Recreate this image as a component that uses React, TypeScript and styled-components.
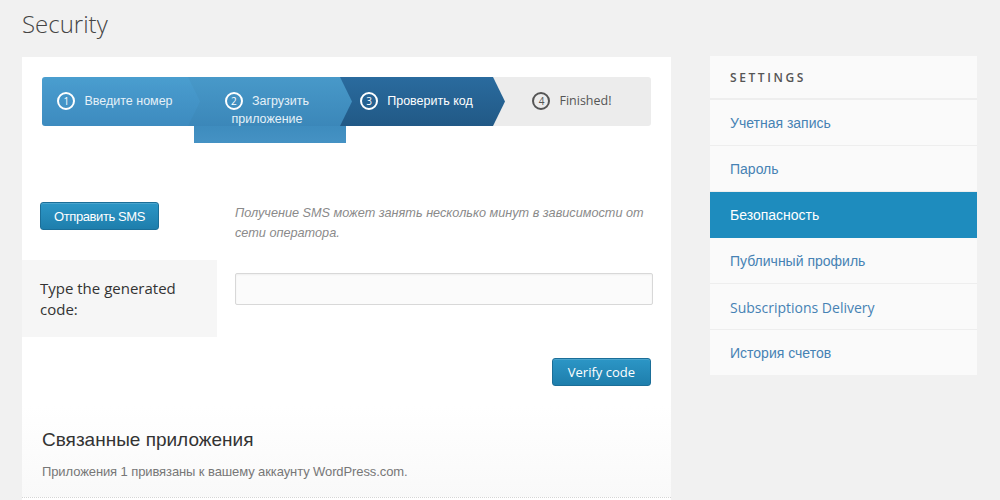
import React from "react";
import styled, { createGlobalStyle } from "styled-components";

const GlobalStyle = createGlobalStyle`
  html, body {
    margin: 0;
    padding: 0;
    background: #f1f1f1;
    font-family: "Open Sans", "Liberation Sans", sans-serif;
  }
`;

const STEPS = [
  { n: 1, label: "Введите номер", w: 146, state: "done" },
  { n: 2, label: "Загрузить приложение", w: 152, state: "done", overhang: true },
  { n: 3, label: "Проверить код", w: 153, state: "active" },
  { n: 4, label: "Finished!", w: 158, state: "todo" },
];

const MENU = [
  { label: "Учетная запись", cyr: true },
  { label: "Пароль", cyr: true },
  { label: "Безопасность", cyr: true, active: true },
  { label: "Публичный профиль", cyr: true },
  { label: "Subscriptions Delivery", cyr: false },
  { label: "История счетов", cyr: true },
];

const TIP = 12;

export default function App() {
  return (
    <>
      <GlobalStyle />
      <Page>
        <Title>Security</Title>
        <Columns>
          <Main>
            <Steps>
              {STEPS.map((s, i) => (
                <Step
                  key={s.n}
                  $w={s.w}
                  $tip={i < STEPS.length - 1}
                  $z={STEPS.length - i}
                >
                  <StepShape
                    $state={s.state}
                    $tip={i < STEPS.length - 1}
                    $first={i === 0}
                    $last={i === STEPS.length - 1}
                  />
                  {s.overhang && <Overhang />}
                  <StepLabel $tip={i < STEPS.length - 1} $state={s.state} $wrap={!!s.overhang}>
                    <StepNum $state={s.state}>{s.n}</StepNum>
                    {s.label}
                  </StepLabel>
                </Step>
              ))}
            </Steps>

            <SmsRow>
              <Cell>
                <BlueButton $cyr>Отправить SMS</BlueButton>
              </Cell>
              <Hint>
                Получение SMS может занять несколько минут в зависимости от
                сети оператора.
              </Hint>
            </SmsRow>

            <CodeRow>
              <CodeLabel>Type the generated code:</CodeLabel>
              <CodeInput type="text" />
            </CodeRow>

            <VerifyRow>
              <BlueButton>Verify code</BlueButton>
            </VerifyRow>

            <Related>
              <RelatedTitle>Связанные приложения</RelatedTitle>
              <RelatedText>
                Приложения 1 привязаны к вашему аккаунту WordPress.com.
              </RelatedText>
            </Related>
          </Main>

          <Sidebar>
            <SideHead>Settings</SideHead>
            {MENU.map((m) => (
              <SideItem key={m.label} $active={!!m.active} $cyr={m.cyr}>
                {m.label}
              </SideItem>
            ))}
          </Sidebar>
        </Columns>
      </Page>
    </>
  );
}

const Page = styled.div`
  padding: 0 22px;
  width: 1000px;
  box-sizing: border-box;
  height: 500px;
  overflow: hidden;
`;

const Title = styled.h1`
  margin: 0;
  padding-top: 7px;
  height: 50px;
  font-family: "Open Sans", sans-serif;
  font-weight: 300;
  font-size: 24px;
  line-height: 33px;
  color: #444;
`;

const Columns = styled.div`
  display: flex;
  align-items: flex-start;
  gap: 39px;
`;

const Main = styled.div`
  width: 649px;
  box-sizing: border-box;
  background: #fff;
  padding: 20px 20px 0;
  min-height: 460px;
`;

const Steps = styled.div`
  display: flex;
  height: 49px;
`;

const Step = styled.div<{ $w: number; $tip: boolean; $z: number }>`
  position: relative;
  flex: none;
  width: ${(p) => p.$w + (p.$tip ? TIP : 0)}px;
  margin-right: ${(p) => (p.$tip ? -TIP : 0)}px;
  z-index: ${(p) => p.$z};
  height: 49px;
`;

const StepShape = styled.div<{
  $state: string;
  $tip: boolean;
  $first: boolean;
  $last: boolean;
}>`
  position: absolute;
  inset: 0;
  border-radius: ${(p) => (p.$first ? "3px 0 0 3px" : p.$last ? "0 3px 3px 0" : "0")};
  background: ${(p) =>
    p.$state === "active"
      ? "linear-gradient(#2a6b9e, #215986)"
      : p.$state === "done"
      ? "linear-gradient(#4899c9, #3b87b9)"
      : "#ececec"};
  clip-path: ${(p) =>
    p.$tip
      ? `polygon(0 0, calc(100% - ${TIP}px) 0, 100% 50%, calc(100% - ${TIP}px) 100%, 0 100%)`
      : "none"};
  ${(p) => p.$first && "filter: brightness(1.03);"}
`;

const Overhang = styled.div`
  position: absolute;
  left: 6px;
  right: 6px;
  top: 100%;
  height: 17px;
  background: linear-gradient(#3e8cbe, #4592c4);
`;

const StepLabel = styled.div<{ $tip: boolean; $state: string; $wrap: boolean }>`
  position: relative;
  box-sizing: border-box;
  padding: 15px ${(p) => (p.$tip ? TIP + 6 : 6)}px 0 6px;
  text-align: center;
  font-family: ${(p) =>
    p.$state === "todo" ? `"Open Sans", sans-serif` : `"Liberation Sans", Arial, sans-serif`};
  font-size: 12.5px;
  line-height: 18px;
  color: ${(p) => (p.$state === "todo" ? "#555" : p.$state === "active" ? "#fff" : "#e6f1f8")};
  ${(p) => p.$wrap && "padding-left: 34px; padding-right: 40px;"}
`;

const StepNum = styled.span<{ $state: string }>`
  display: inline-block;
  box-sizing: border-box;
  width: 18px;
  height: 18px;
  margin-right: 9px;
  border-radius: 50%;
  border: 2px solid ${(p) => (p.$state === "todo" ? "#555" : "#fff")};
  font-family: "Open Sans", sans-serif;
  font-weight: 400;
  font-size: 10px;
  line-height: 14px;
  text-align: center;
  vertical-align: top;
  color: ${(p) => (p.$state === "todo" ? "#555" : "#fff")};
`;

const FormRow = styled.div`
  display: grid;
  grid-template-columns: 195px 1fr;
  column-gap: 18px;
  margin: 0 -20px;
  padding-right: 18px;
`;

const SmsRow = styled(FormRow)`
  margin-top: 76px;
`;

const Cell = styled.div`
  padding-left: 18px;
`;

const BlueButton = styled.button<{ $cyr?: boolean }>`
  height: 28px;
  padding: 0 ${(p) => (p.$cyr ? "13px" : "15px")};
  border: 1px solid #1b6e98;
  border-radius: 3px;
  background: linear-gradient(#2c96c6, #1e7eac);
  color: #fff;
  font-family: ${(p) =>
    p.$cyr ? `"Liberation Sans", Arial, sans-serif` : `"Open Sans", sans-serif`};
  font-size: 13px;
  letter-spacing: ${(p) => (p.$cyr ? "-0.4px" : "0")};
  box-shadow: inset 0 1px 0 rgba(255, 255, 255, 0.15);
  cursor: pointer;
`;

const Hint = styled.p`
  margin: 1px 0 0;
  font-family: "Liberation Sans", Arial, sans-serif;
  font-style: italic;
  font-size: 12.7px;
  line-height: 20px;
  color: #8a8a8a;
`;

const CodeRow = styled(FormRow)`
  margin-top: 17px;
`;

const CodeLabel = styled.label`
  box-sizing: border-box;
  height: 77px;
  padding: 18px 18px 0;
  background: #f6f6f6;
  font-family: "Open Sans", sans-serif;
  font-size: 15px;
  line-height: 21px;
  color: #333;
`;

const CodeInput = styled.input`
  align-self: start;
  margin-top: 13px;
  height: 32px;
  box-sizing: border-box;
  border: 1px solid #d8d8d8;
  border-radius: 2px;
  background: #fbfbfb;
  box-shadow: inset 0 1px 2px rgba(0, 0, 0, 0.05);
`;

const VerifyRow = styled.div`
  display: flex;
  justify-content: flex-end;
  margin-top: 21px;
`;

const Related = styled.section`
  margin: 20px -20px 0;
  padding: 22px 20px 15px;
  background: linear-gradient(#fff, #f9f9f9);
  border-bottom: 1px dotted #d5d5d5;
`;

const RelatedTitle = styled.h2`
  margin: 0 0 10px;
  font-family: "Liberation Sans", Arial, sans-serif;
  font-weight: 400;
  font-size: 19px;
  line-height: 24px;
  color: #333;
`;

const RelatedText = styled.p`
  margin: 0;
  font-family: "Liberation Sans", Arial, sans-serif;
  font-size: 13px;
  letter-spacing: -0.1px;
  line-height: 20px;
  color: #777;
`;

const Sidebar = styled.nav`
  width: 267px;
  margin-top: -1px;
  background: #fafafa;
`;

const SideHead = styled.div`
  height: 42px;
  padding: 0 20px;
  border-bottom: 2px solid #eeeeee;
  font-family: "Open Sans", sans-serif;
  font-size: 12px;
  font-weight: 600;
  letter-spacing: 2.6px;
  text-transform: uppercase;
  line-height: 44px;
  color: #555;
`;

const SideItem = styled.a<{ $active: boolean; $cyr: boolean }>`
  display: block;
  height: 45px;
  padding: 0 20px;
  border-bottom: 1px solid ${(p) => (p.$active ? "#1e8cbe" : "#eeeeee")};
  background: ${(p) => (p.$active ? "#1e8cbe" : "transparent")};
  color: ${(p) => (p.$active ? "#fff" : "#4682b4")};
  font-family: ${(p) =>
    p.$cyr ? `"Liberation Sans", Arial, sans-serif` : `"Open Sans", sans-serif`};
  font-size: 14px;
  line-height: 47px;
  text-decoration: none;
  &:last-child {
    border-bottom: none;
  }
`;
